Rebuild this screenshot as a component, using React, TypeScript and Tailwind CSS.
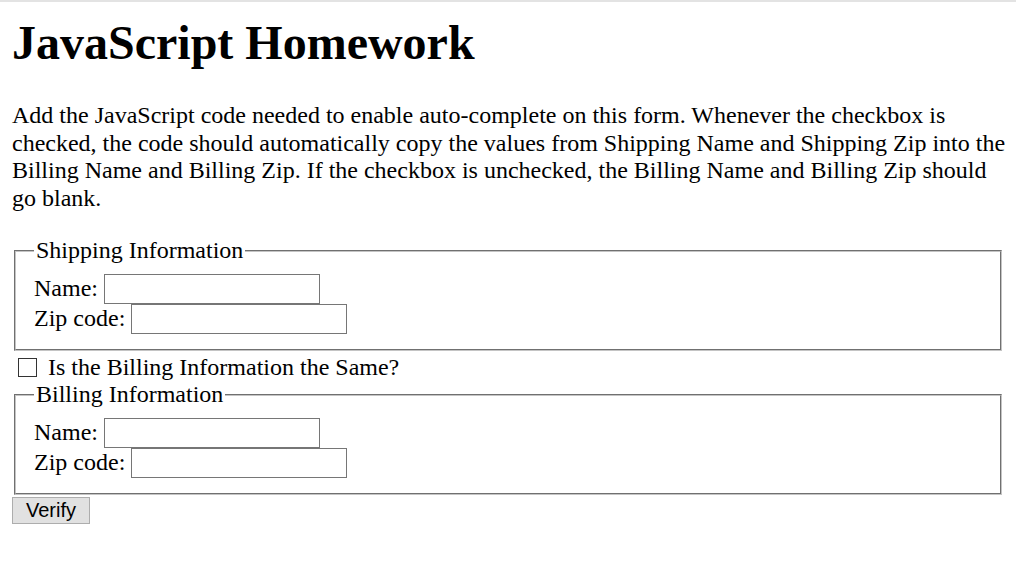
import React from "react";

function Row({ label }: { label: string }) {
  return (
    <div className="flex h-[30px] items-center gap-[6px]">
      <span className="leading-[27.6px]">{label}</span>
      <input
        type="text"
        className="box-border h-[30px] w-[216px] border border-[#767676] bg-white px-[2px] text-[20px] outline-none"
      />
    </div>
  );
}

function Group({ title }: { title: string }) {
  return (
    <fieldset className="mx-[2px] border-2 border-[#c4c4c4] px-[18px] pt-[9px] pb-[15px] [border-style:groove]">
      <legend className="px-[2px] leading-[27.6px]">{title}</legend>
      <Row label="Name:" />
      <Row label="Zip code:" />
    </fieldset>
  );
}

export default function App() {
  return (
    <div className="min-h-screen border-t-2 border-[#e3e3e3] bg-white px-[12px] font-['Liberation_Serif','Times_New_Roman',serif] text-[24px] text-black">
      <h1 className="mt-[13px] text-[48px] font-bold leading-[55px]">JavaScript Homework</h1>
      <p className="mt-[32px] mr-[-7px] leading-[27.6px]">
        Add the JavaScript code needed to enable auto-complete on this form. Whenever the checkbox is
        checked, the code should automatically copy the values from Shipping Name and Shipping Zip into
        the Billing Name and Billing Zip. If the checkbox is unchecked, the Billing Name and Billing Zip
        should go blank.
      </p>
      <form className="mt-[25px]">
        <Group title="Shipping Information" />
        <div className="flex h-[30px] items-start pt-[3px]">
          <input
            type="checkbox"
            className="mt-[4px] ml-[6px] mr-[11px] box-border h-[19px] w-[19px] appearance-none border border-[#333333] bg-white"
          />
          <span className="leading-[27.6px]">Is the Billing Information the Same?</span>
        </div>
        <Group title="Billing Information" />
        <div className="flex pt-[2px]">
          <button
            type="button"
            className="box-border block h-[27px] w-[78px] border border-[#adadad] bg-[#e1e1e1] font-['Liberation_Sans',Arial,sans-serif] text-[20px] leading-[25px] text-black"
          >
            Verify
          </button>
        </div>
      </form>
    </div>
  );
}
